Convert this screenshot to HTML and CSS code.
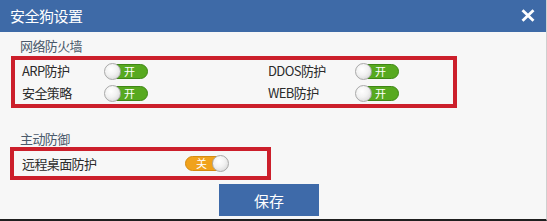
FILE: index.html
```html
<!DOCTYPE html>
<html lang="zh-CN">
<head>
<meta charset="utf-8">
<title>安全狗设置</title>
<link rel="stylesheet" href="styles.css">
</head>
<body>
<div class="dialog">
  <div class="header">
    <span class="title">安全狗设置</span>
    <span class="close">
      <svg width="14" height="13" viewBox="0 0 14 13"><path d="M1.5 1.2 L12.5 11.8 M12.5 1.2 L1.5 11.8" stroke="#fff" stroke-width="2.8" stroke-linecap="butt"/></svg>
    </span>
  </div>
  <div class="body">
    <div class="section-title first">网络防火墙</div>
    <div class="box grid">
      <span class="label">ARP防护</span>
      <span class="cell"><span class="switch on"><span class="knob"></span><span class="txt">开</span></span></span>
      <span class="label">DDOS防护</span>
      <span class="cell"><span class="switch on"><span class="knob"></span><span class="txt">开</span></span></span>
      <span class="label">安全策略</span>
      <span class="cell"><span class="switch on"><span class="knob"></span><span class="txt">开</span></span></span>
      <span class="label">WEB防护</span>
      <span class="cell"><span class="switch on"><span class="knob"></span><span class="txt">开</span></span></span>
    </div>
    <div class="section-title second">主动防御</div>
    <div class="box single">
      <span class="label wide">远程桌面防护</span>
      <span class="switch off"><span class="txt">关</span><span class="knob"></span></span>
    </div>
    <div class="actions">
      <button class="save">保存</button>
    </div>
  </div>
</div>
</body>
</html>
```
FILE: styles.css
```css
html, body {
  margin: 0;
  padding: 0;
}
body {
  width: 547px;
  height: 221px;
  background: #f7f7f7;
  font-family: "Noto Sans CJK SC", "Liberation Sans", sans-serif;
  overflow: hidden;
}
.dialog {
  box-sizing: border-box;
  width: 547px;
  height: 221px;
  background: #f7f7f7;
  border-right: 1px solid #cfcfcf;
  border-bottom: 2px solid #1f1f1f;
  display: flex;
  flex-direction: column;
}
.header {
  height: 32px;
  background: #3e6aa7;
  display: flex;
  align-items: center;
  justify-content: space-between;
  padding: 0 11px 0 10px;
}
.title {
  color: #fff;
  font-size: 15px;
  line-height: 18px;
  letter-spacing: -0.5px;
}
.close {
  display: flex;
  margin-top: -1px;
}
.body {
  padding: 0;
}
.section-title {
  font-size: 13px;
  line-height: 16px;
  color: #4b5a6b;
  padding-left: 20px;
  letter-spacing: -0.6px;
}
.section-title.first {
  margin-top: 6px;
  margin-bottom: 2px;
}
.section-title.second {
  margin-top: 23px;
}
.box {
  box-sizing: border-box;
  border: 4px solid #cc1f2b;
}
.grid {
  margin-left: 11px;
  width: 446px;
  height: 52px;
  padding-left: 7px;
  display: grid;
  grid-template-columns: 83px 163px 88px auto;
  grid-auto-rows: 22px;
  align-items: center;
}
.single {
  margin-left: 10px;
  width: 261px;
  height: 33px;
  padding-left: 8px;
  display: flex;
  align-items: center;
}
.label {
  font-size: 13px;
  color: #2b2b2b;
  line-height: 16px;
  letter-spacing: -0.6px;
}
.label.wide {
  width: 163px;
}
.cell {
  display: flex;
  align-items: center;
}
.switch {
  box-sizing: border-box;
  width: 43px;
  height: 15px;
  border-radius: 8px;
  display: flex;
  align-items: center;
}
.switch.on {
  background: #57a91f;
  border: 1px solid #3f8716;
}
.switch.off {
  background: #f0a21c;
  border: 1px solid #d58a10;
  justify-content: flex-end;
}
.knob {
  box-sizing: border-box;
  width: 17px;
  height: 17px;
  border-radius: 50%;
  background: radial-gradient(circle at 40% 35%, #ffffff 0%, #f2f2f2 45%, #cfcfcf 100%);
  border: 1px solid #a9a9a9;
  flex: none;
}
.switch.on .knob {
  margin-left: -2px;
}
.switch.off .knob {
  margin-right: -2px;
}
.txt {
  color: #fff;
  font-size: 11px;
  line-height: 13px;
}
.switch.on .txt {
  margin-left: 3px;
}
.switch.off .txt {
  margin-right: 5px;
}
.actions {
  display: flex;
  padding-left: 219px;
  margin-top: 4px;
}
.save {
  width: 100px;
  height: 32px;
  border: none;
  background: #3e6aa9;
  color: #fff;
  font-family: "Noto Sans CJK SC", "Liberation Sans", sans-serif;
  font-size: 15px;
  padding: 0;
  margin: 0;
  border-radius: 0;
}
```
